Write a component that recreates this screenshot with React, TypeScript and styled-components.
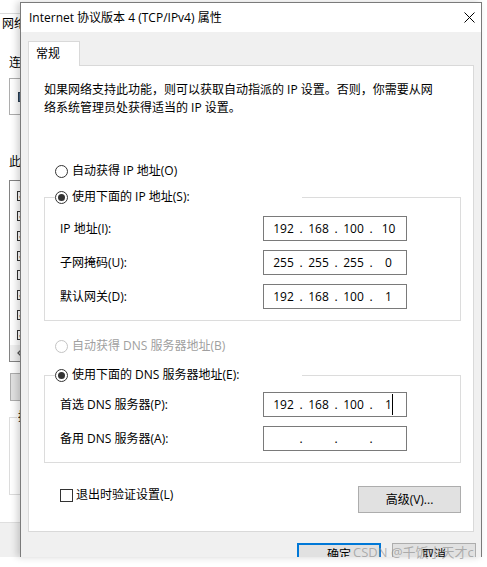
import React from 'react';
import styled, { createGlobalStyle } from 'styled-components';

const FONT = `"Open Sans", "Noto Sans CJK SC", sans-serif`;

const GlobalStyle = createGlobalStyle`
  html, body { margin: 0; padding: 0; background: #fff; }
  body { font-family: ${FONT}; font-size: 12px; color: #000; }
  * { box-sizing: border-box; }
`;

const Desktop = styled.div`
  position: relative;
  width: 487px;
  height: 567px;
  overflow: hidden;
  background: #fff;
  font-family: ${FONT};
  font-size: 12px;
  line-height: 18px;
  color: #000;
`;

/* ---------- parent window behind the dialog (only its left strip shows) ---------- */
const BackWindow = styled.div`
  position: absolute;
  left: 0;
  top: 0;
  width: 21px;
  height: 557px;
  overflow: hidden;
  display: flex;
  flex-direction: column;
  background: #fff;
`;
const BackTop = styled.div`
  height: 14px;
  flex: none;
  border-bottom: 1px solid #dadada;
`;
const BackTabRow = styled.div`
  height: 20px;
  flex: none;
  padding-left: 2px;
  display: flex;
  align-items: center;
  overflow: hidden;
  white-space: nowrap;
`;
const BackPanel = styled.div`
  flex: 1;
  display: flex;
  flex-direction: column;
  padding-left: 9px;
`;
const BackLabel = styled.div<{ $mt: number }>`
  margin-top: ${(p) => p.$mt}px;
  height: 18px;
  width: 12px;
  overflow: hidden;
  white-space: nowrap;
`;
const AdapterBox = styled.div`
  margin-top: 6px;
  height: 37px;
  width: 40px;
  border: 1px solid #adadad;
  display: flex;
  align-items: center;
  padding-left: 8px;
`;
const AdapterIcon = styled.div`
  width: 10px;
  height: 10px;
  background: #4a6a8a;
  border: 1px solid #2c3e50;
`;
const ItemList = styled.div`
  margin-top: 9px;
  height: 182px;
  width: 40px;
  border: 1px solid #828282;
  display: flex;
  flex-direction: column;
  padding-top: 5px;
`;
const ListItem = styled.div`
  height: 21px;
  display: flex;
  align-items: center;
  padding-left: 7px;
`;
const MiniCheck = styled.span<{ $on: boolean }>`
  width: 10px;
  height: 10px;
  border: 1px solid #333;
  display: flex;
  align-items: center;
  justify-content: center;
  font-size: 8px;
  line-height: 8px;
  color: ${(p) => (p.$on ? '#000' : 'transparent')};
`;
const HScroll = styled.div`
  margin-top: auto;
  height: 17px;
  background: #f0f0f0;
  display: flex;
  align-items: center;
  padding-left: 5px;
`;
const BackButton = styled.div`
  margin-top: 11px;
  margin-left: 1px;
  height: 28px;
  width: 40px;
  background: #e1e1e1;
  border: 1px solid #adadad;
`;
const BackGroup = styled.div`
  margin-top: 16px;
  height: 78px;
  border: 1px solid #dcdcdc;
  width: 40px;
`;
const BackLegend = styled.div`
  margin: -10px 0 0 7px;
  padding: 0 1px;
  background: #fff;
  width: 14px;
  overflow: hidden;
  white-space: nowrap;
`;
const BackFooter = styled.div`
  margin-top: auto;
  height: 35px;
  flex: none;
  border-top: 1px solid #dfdfdf;
  background: #f0f0f0;
`;

/* ---------- the dialog ---------- */
const Dialog = styled.div`
  position: absolute;
  left: 20px;
  top: 2px;
  width: 462px;
  height: 555px;
  border: 1px solid #7a7a7a;
  border-bottom: none;
  background: #f0f0f0;
  display: flex;
  flex-direction: column;
  overflow: hidden;
  box-shadow: -3px 0 7px rgba(0, 0, 0, 0.18);
`;
const TitleBar = styled.div`
  height: 29px;
  flex: none;
  background: #fff;
  display: flex;
  align-items: center;
  justify-content: space-between;
  padding-left: 8px;
`;
const TitleText = styled.div`
  white-space: nowrap;
`;
const CloseButton = styled.div`
  width: 24px;
  height: 29px;
  display: flex;
  align-items: center;
  justify-content: center;
`;
const Body = styled.div`
  flex: 1;
  display: flex;
  flex-direction: column;
  padding: 9px 7px 0;
`;
const TabStrip = styled.div`
  display: flex;
  height: 24px;
`;
const Tab = styled.div`
  position: relative;
  z-index: 1;
  width: 52px;
  height: 25px;
  background: #fff;
  border: 1px solid #d9d9d9;
  border-bottom: none;
  padding-left: 7px;
  display: flex;
  align-items: center;
`;
const Panel = styled.div`
  height: 467px;
  flex: none;
  background: #fff;
  border: 1px solid #d9d9d9;
  padding: 15px 12px 0 15px;
  display: flex;
  flex-direction: column;
`;
const Intro = styled.p`
  margin: 0;
  line-height: 18px;
`;
const RadioRow = styled.label<{ $mt?: number; $disabled?: boolean }>`
  display: flex;
  align-items: center;
  gap: 4px;
  height: 18px;
  margin-top: ${(p) => p.$mt ?? 0}px;
  margin-left: 11px;
  color: ${(p) => (p.$disabled ? '#a0a0a0' : '#000')};
  white-space: nowrap;
`;
const RadioDot = styled.span<{ $checked?: boolean; $disabled?: boolean }>`
  flex: none;
  width: 13px;
  height: 13px;
  border-radius: 50%;
  border: 1px solid ${(p) => (p.$disabled ? '#c4c4c4' : '#333')};
  background: #fff;
  display: flex;
  align-items: center;
  justify-content: center;
  &::after {
    content: '';
    width: 7px;
    height: 7px;
    border-radius: 50%;
    background: ${(p) => (p.$checked ? '#333' : 'transparent')};
  }
`;
const Group = styled.div<{ $mt: number }>`
  margin-top: ${(p) => p.$mt}px;
  border: 1px solid #dcdcdc;
  display: flex;
  flex-direction: column;
  padding-bottom: 11px;
`;
const Legend = styled(RadioRow)`
  margin: -10px 0 0 10px;
  width: 247px;
  background: #fff;
`;
const Rows = styled.div<{ $mt: number }>`
  margin-top: ${(p) => p.$mt}px;
  display: flex;
  flex-direction: column;
  gap: 9px;
`;
const FieldRow = styled.div`
  display: grid;
  grid-template-columns: 203px 144px;
  align-items: center;
  padding-left: 15px;
  white-space: nowrap;
`;
const IpBox = styled.div`
  width: 144px;
  height: 25px;
  border: 1px solid #7a7a7a;
  background: #fff;
  display: flex;
  align-items: center;
  padding-left: 5px;
`;
const Seg = styled.span`
  position: relative;
  width: 29px;
  text-align: center;
`;
const IpDot = styled.span`
  width: 6px;
  text-align: center;
`;
const Caret = styled.span`
  position: absolute;
  left: calc(50% + 3px);
  top: -2px;
  width: 1px;
  height: 21px;
  background: #000;
`;
const BottomRow = styled.div`
  margin-top: 23px;
  display: flex;
  justify-content: space-between;
  align-items: flex-start;
`;
const CheckLabel = styled.label`
  display: flex;
  align-items: center;
  gap: 3px;
  height: 18px;
  padding-left: 16px;
  white-space: nowrap;
`;
const CheckBox = styled.span`
  width: 13px;
  height: 13px;
  border: 1px solid #333;
  background: #fff;
`;
const Button = styled.div<{ $w: number; $h: number; $default?: boolean }>`
  width: ${(p) => p.$w}px;
  height: ${(p) => p.$h}px;
  flex: none;
  background: #e1e1e1;
  border: ${(p) => (p.$default ? '2px solid #0078d7' : '1px solid #adadad')};
  display: flex;
  align-items: center;
  justify-content: center;
  white-space: nowrap;
`;
const Footer = styled.div`
  margin: 11px -2px 0 0;
  display: flex;
  justify-content: flex-end;
  gap: 11px;
`;
const Watermark = styled.div`
  position: absolute;
  left: 353px;
  top: 544px;
  font-family: ${FONT};
  font-size: 13px;
  line-height: 16px;
  color: rgba(140, 140, 140, 0.65);
  white-space: nowrap;
  pointer-events: none;
`;

type IpProps = { parts: string[]; caret?: boolean };
const IpField: React.FC<IpProps> = ({ parts, caret }) => (
  <IpBox>
    {parts.map((p, i) => (
      <React.Fragment key={i}>
        <Seg>
          {p}
          {caret && i === 3 && <Caret />}
        </Seg>
        {i < 3 && <IpDot>.</IpDot>}
      </React.Fragment>
    ))}
  </IpBox>
);

const CloseIcon = () => (
  <svg width="11" height="11" viewBox="0 0 11 11">
    <path d="M0.5 0.5 L10.5 10.5 M10.5 0.5 L0.5 10.5" stroke="#000" strokeWidth="1" fill="none" />
  </svg>
);

const ChevronLeft = () => (
  <svg width="8" height="8" viewBox="0 0 8 8">
    <path d="M6 1 L3 4 L6 7" stroke="#555" strokeWidth="1.3" fill="none" />
  </svg>
);

const backItems = [true, true, true, true, false, true, true, true];

export default function App() {
  return (
    <>
      <GlobalStyle />
      <Desktop>
        <BackWindow>
          <BackTop />
          <BackTabRow>网络</BackTabRow>
          <BackPanel>
            <BackLabel $mt={20}>连接时使用:</BackLabel>
            <AdapterBox>
              <AdapterIcon />
            </AdapterBox>
            <BackLabel $mt={38}>此连接使用下列项目(O):</BackLabel>
            <ItemList>
              {backItems.map((on, i) => (
                <ListItem key={i}>
                  <MiniCheck $on={on}>✓</MiniCheck>
                </ListItem>
              ))}
              <HScroll>
                <ChevronLeft />
              </HScroll>
            </ItemList>
            <BackButton />
            <BackGroup>
              <BackLegend>描述</BackLegend>
            </BackGroup>
          </BackPanel>
          <BackFooter />
        </BackWindow>

        <Dialog>
          <TitleBar>
            <TitleText>Internet 协议版本 4 (TCP/IPv4) 属性</TitleText>
            <CloseButton>
              <CloseIcon />
            </CloseButton>
          </TitleBar>
          <Body>
            <TabStrip>
              <Tab>常规</Tab>
            </TabStrip>
            <Panel>
              <Intro>
                如果网络支持此功能，则可以获取自动指派的 IP 设置。否则，你需要从网
                <br />
                络系统管理员处获得适当的 IP 设置。
              </Intro>

              <RadioRow $mt={45}>
                <RadioDot />
                自动获得 IP 地址(O)
              </RadioRow>
              <Group $mt={17}>
                <Legend>
                  <RadioDot $checked />
                  使用下面的 IP 地址(S):
                </Legend>
                <Rows $mt={10}>
                  <FieldRow>
                    <span>IP 地址(I):</span>
                    <IpField parts={['192', '168', '100', '10']} />
                  </FieldRow>
                  <FieldRow>
                    <span>子网掩码(U):</span>
                    <IpField parts={['255', '255', '255', '0']} />
                  </FieldRow>
                  <FieldRow>
                    <span>默认网关(D):</span>
                    <IpField parts={['192', '168', '100', '1']} />
                  </FieldRow>
                </Rows>
              </Group>

              <RadioRow $mt={16} $disabled>
                <RadioDot $disabled />
                自动获得 DNS 服务器地址(B)
              </RadioRow>
              <Group $mt={20}>
                <Legend>
                  <RadioDot $checked />
                  使用下面的 DNS 服务器地址(E):
                </Legend>
                <Rows $mt={8}>
                  <FieldRow>
                    <span>首选 DNS 服务器(P):</span>
                    <IpField parts={['192', '168', '100', '1']} caret />
                  </FieldRow>
                  <FieldRow>
                    <span>备用 DNS 服务器(A):</span>
                    <IpField parts={['', '', '', '']} />
                  </FieldRow>
                </Rows>
              </Group>

              <BottomRow>
                <CheckLabel>
                  <CheckBox />
                  退出时验证设置(L)
                </CheckLabel>
                <Button $w={103} $h={27}>
                  高级(V)...
                </Button>
              </BottomRow>
            </Panel>
            <Footer>
              <Button $w={84} $h={23} $default>
                确定
              </Button>
              <Button $w={84} $h={23}>
                取消
              </Button>
            </Footer>
          </Body>
        </Dialog>
        <Watermark>CSDN @千饭小天才c</Watermark>
      </Desktop>
    </>
  );
}
